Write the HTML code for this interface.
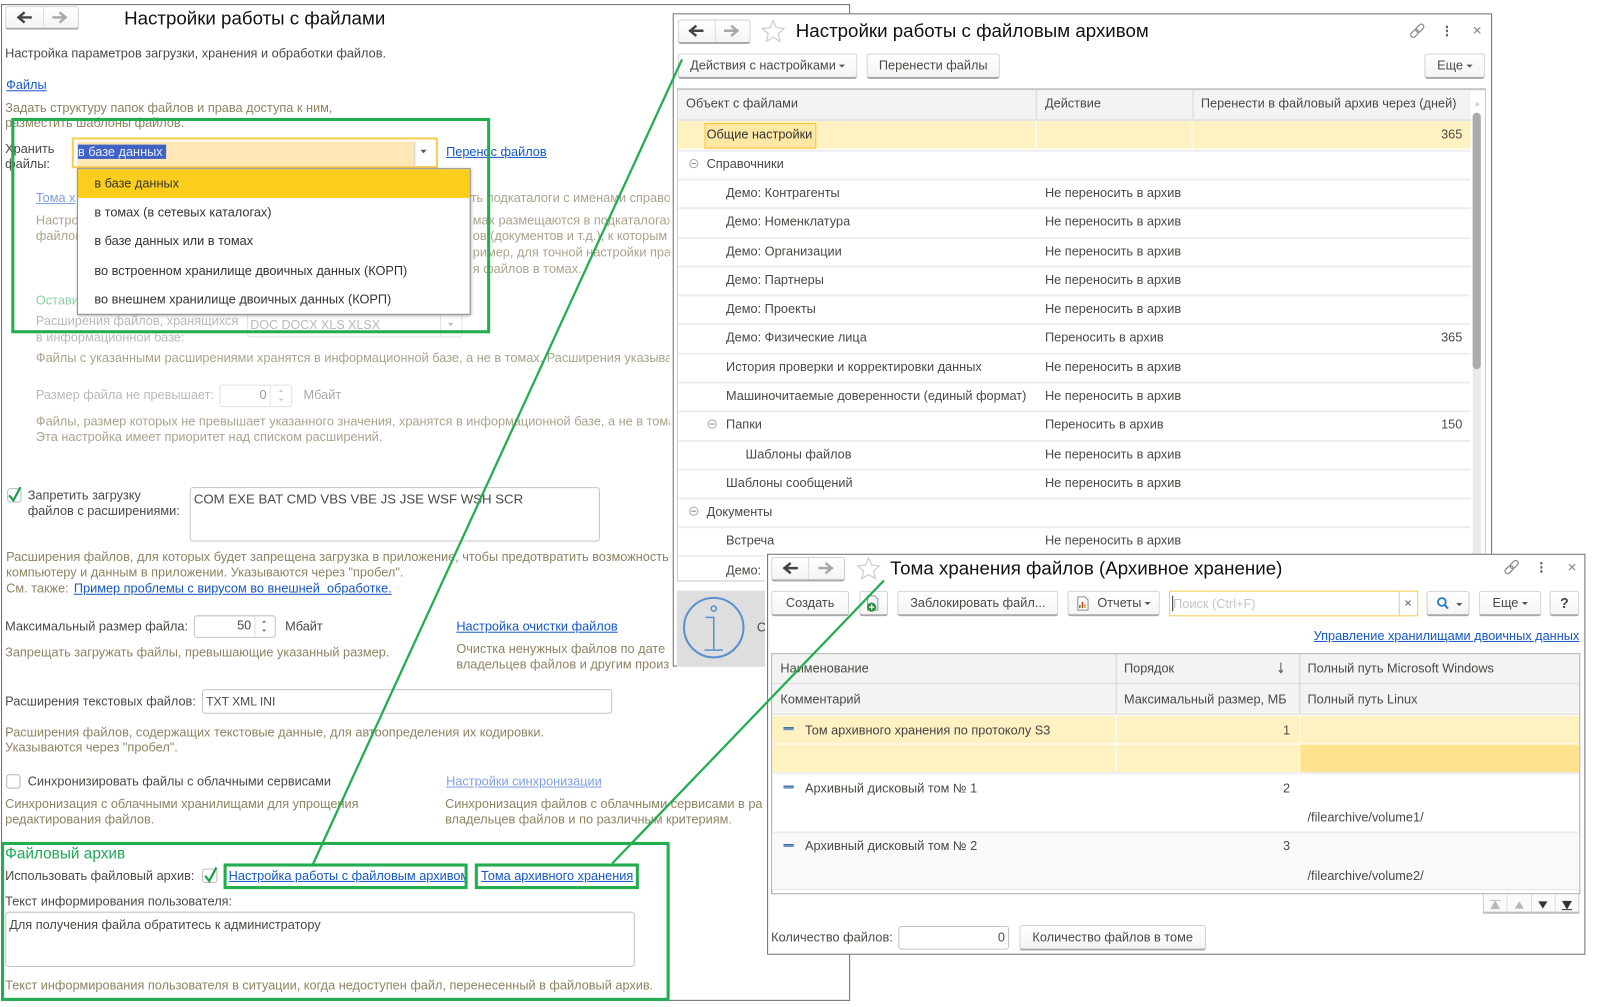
<!DOCTYPE html>
<html lang="ru">
<head>
<meta charset="utf-8">
<title>Настройки работы с файлами</title>
<style>
html,body{margin:0;padding:0;background:#fff;width:1608px;height:1007px;overflow:hidden}
#w{position:absolute;left:0;top:0;width:1568px;height:982px;transform:scale(1.0255);transform-origin:0 0;font-family:"Liberation Sans",sans-serif;font-size:12.43px;color:#4a4a44;overflow:hidden;filter:blur(.35px)}
.t{position:absolute;white-space:nowrap;line-height:16px;font-size:12.43px;height:16px}
.h{color:#8f8363}
.g{color:#aaa38e}
.d{color:#b9b9b9}
.a{color:#1557c8;text-decoration:underline}
.al{color:#7f9fe0;text-decoration:underline}
.r{text-align:right}
.ti{font-size:18.25px;line-height:24px;height:24px;color:#111}
.b{position:absolute;box-sizing:border-box;border:1px solid #cfcfcf;border-bottom:2px solid #a9a9a9;border-radius:3px;background:linear-gradient(#fff,#f4f4f4);text-align:center;line-height:22px;white-space:nowrap;color:#4a4a44}
.c{display:inline-block;width:0;height:0;border-top:3.5px solid #555;border-left:3px solid transparent;border-right:3px solid transparent;margin-left:3px;vertical-align:middle}
.f{position:absolute;box-sizing:border-box;border:1px solid #c4c4c4;border-radius:3px;background:#fff}
.win{position:absolute;box-sizing:border-box;background:#fff;border:1px solid #6e6e6e}
.box{position:absolute;box-sizing:border-box;border:3px solid #22ad50;pointer-events:none}
.sep{position:absolute;height:2px;background:#eeeeee}
.m{position:absolute;width:9px;height:9px;box-sizing:border-box;border:1px solid #a9a9a9;border-radius:50%}
.m:after{content:"";position:absolute;left:1px;top:3px;width:5px;height:1px;background:#8a8a8a}
.v{position:absolute;width:10px;height:3px;background:#6c93bd;border-top:1px solid #3f6c9f;box-sizing:border-box}
svg{position:absolute;overflow:visible}
</style>
</head>
<body>
<div id="w">

<!-- WINDOW 1 -->
<div class="win" style="left:1px;top:4px;width:828px;height:972px"></div>
<div class="b" style="left:5px;top:6px;width:72px;height:23px"></div>
<div style="position:absolute;left:42px;top:7px;width:1px;height:20px;background:#ddd"></div>
<svg style="left:0;top:0" width="10" height="10"><path d="M31 17H18M24 12l-6 5 6 5" fill="none" stroke="#444" stroke-width="2.4"/><path d="M51 17H64M58 12l6 5-6 5" fill="none" stroke="#a8a8a8" stroke-width="2.4"/></svg>
<div class="t ti" style="left:121px;top:6px">Настройки работы с файлами</div>
<div class="t" style="left:5px;top:44px">Настройка параметров загрузки, хранения и обработки файлов.</div>
<div class="t a" style="left:6px;top:75px">Файлы</div>
<div class="t h" style="left:5px;top:97px">Задать структуру папок файлов и права доступа к ним,</div>
<div class="t h" style="left:5px;top:112px">разместить шаблоны файлов.</div>
<div class="t" style="left:5px;top:137px">Хранить</div>
<div class="t" style="left:5px;top:152px">файлы:</div>

<div style="position:absolute;left:70px;top:134px;width:357px;height:30px;box-sizing:border-box;border:2px solid #f7cd4f;background:#fff"></div>
<div style="position:absolute;left:75px;top:138px;width:329px;height:24px;background:#ffe8b6"></div>
<div style="position:absolute;left:404px;top:138px;width:1px;height:24px;background:#cfcfcf"></div>
<div style="position:absolute;left:76px;top:141px;width:86px;height:14px;background:#3f62c4"></div>
<div class="t" style="left:76px;top:140px;color:#e8edff">в базе данных</div>
<svg style="left:0;top:0" width="10" height="10"><path d="M410 146h6l-3 3.500z" fill="#555"/></svg>
<div class="t a" style="left:435px;top:140px">Перенос файлов</div>

<div class="t al" style="left:35px;top:185px">Тома х</div>
<div class="t g" style="left:35px;top:207px">Настро</div>
<div class="t g" style="left:35px;top:222px">файлов</div>
<div class="t" style="left:35px;top:285px;color:#8fd0a5">Остави</div>
<div class="t g" style="left:459px;top:185px">ть подкаталоги с именами справочников</div>
<div class="t g" style="left:461px;top:207px">мах размещаются в подкаталогах</div>
<div class="t g" style="left:461px;top:222px">ов (документов и т.д.), к которым</div>
<div class="t g" style="left:461px;top:238px">ример, для точной настройки пра</div>
<div class="t g" style="left:461px;top:254px">я файлов в томах.</div>

<div class="t d" style="left:35px;top:305px">Расширения файлов, хранящихся</div>
<div class="t d" style="left:35px;top:321px">в информационной базе:</div>
<div class="f" style="left:241px;top:303px;width:210px;height:26px;border-color:#e2e2e2"></div>
<div class="t d" style="left:244px;top:309px;font-size:12.2px">DOC DOCX XLS XLSX</div>
<div style="position:absolute;left:429px;top:305px;width:1px;height:23px;background:#e6e6e6"></div>
<svg style="left:0;top:0" width="10" height="10"><path d="M437 315h5l-2.500 3z" fill="#bbb"/></svg>

<div class="t g" style="left:35px;top:341px">Файлы с указанными расширениями хранятся в информационной базе, а не в томах. Расширения указываются</div>
<div class="t d" style="left:35px;top:377px">Размер файла не превышает:</div>
<div class="f" style="left:214px;top:375px;width:71px;height:22px;border-color:#e0e0e0"></div>
<div class="t d r" style="left:214px;top:377px;width:46px;color:#9a9a9a">0</div>
<div style="position:absolute;left:263px;top:376px;width:1px;height:20px;background:#e6e6e6"></div>
<svg style="left:0;top:0" width="10" height="10"><path d="M272 382l2-2 2 2zM272 389l2 2 2-2z" fill="#bbb"/></svg>
<div class="t d" style="left:296px;top:377px;color:#a8a8a8">Мбайт</div>
<div class="t g" style="left:35px;top:403px">Файлы, размер которых не превышает указанного значения, хранятся в информационной базе, а не в томах.</div>
<div class="t g" style="left:35px;top:418px">Эта настройка имеет приоритет над списком расширений.</div>

<div class="f" style="left:7px;top:476px;width:14px;height:14px;border-color:#bbb"></div>
<svg style="left:0;top:0" width="10" height="10"><path d="M9 483l4 5 7-13" fill="none" stroke="#1fa14c" stroke-width="2.200"/></svg>
<div class="t" style="left:27px;top:475px">Запретить загрузку</div>
<div class="t" style="left:27px;top:490px">файлов с расширениями:</div>
<div class="f" style="left:185px;top:475px;width:400px;height:53px"></div>
<div class="t" style="left:189px;top:479px;font-size:12.9px">COM EXE BAT CMD VBS VBE JS JSE WSF WSH SCR</div>

<div class="t h" style="left:6px;top:535px">Расширения файлов, для которых будет запрещена загрузка в приложение, чтобы предотвратить возможность</div>
<div class="t h" style="left:6px;top:550px">компьютеру и данным в приложении. Указываются через "пробел".</div>
<div class="t h" style="left:6px;top:566px">См. также:</div>
<div class="t a" style="left:72px;top:566px;white-space:pre">Пример проблемы с вирусом во внешней  обработке.</div>

<div class="t" style="left:5px;top:603px">Максимальный размер файла:</div>
<div class="f" style="left:189px;top:600px;width:80px;height:22px"></div>
<div class="t r" style="left:189px;top:602px;width:56px">50</div>
<div style="position:absolute;left:248px;top:601px;width:1px;height:20px;background:#ddd"></div>
<svg style="left:0;top:0" width="10" height="10"><path d="M255.500 607l2-2 2 2zM255.500 614l2 2 2-2z" fill="#666"/></svg>
<div class="t" style="left:278px;top:603px">Мбайт</div>
<div class="t a" style="left:445px;top:603px">Настройка очистки файлов</div>
<div class="t h" style="left:5px;top:628px">Запрещать загружать файлы, превышающие указанный размер.</div>
<div class="t h" style="left:445px;top:625px">Очистка ненужных файлов по дате</div>
<div class="t h" style="left:445px;top:640px">владельцев файлов и другим произ</div>

<div class="t" style="left:5px;top:676px">Расширения текстовых файлов:</div>
<div class="f" style="left:197px;top:672px;width:400px;height:24px"></div>
<div class="t" style="left:201px;top:676px;font-size:11.8px">TXT XML INI</div>
<div class="t h" style="left:5px;top:706px">Расширения файлов, содержащих текстовые данные, для автоопределения их кодировки.</div>
<div class="t h" style="left:5px;top:721px">Указываются через "пробел".</div>

<div class="f" style="left:6px;top:755px;width:14px;height:14px;border-color:#b4b4b4"></div>
<div class="t" style="left:27px;top:754px">Синхронизировать файлы с облачными сервисами</div>
<div class="t al" style="left:435px;top:754px">Настройки синхронизации</div>
<div class="t h" style="left:5px;top:776px">Синхронизация с облачными хранилищами для упрощения</div>
<div class="t h" style="left:5px;top:791px">редактирования файлов.</div>
<div class="t h" style="left:434px;top:776px">Синхронизация файлов с облачными сервисами в ра</div>
<div class="t h" style="left:434px;top:791px">владельцев файлов и по различным критериям.</div>

<div class="t" style="left:5px;top:825px;font-size:15px;color:#1fa85a">Файловый архив</div>
<div class="t" style="left:5px;top:846px">Использовать файловый архив:</div>
<div class="f" style="left:197px;top:847px;width:15px;height:14px;border-color:#bbb"></div>
<svg style="left:0;top:0" width="10" height="10"><path d="M200 854l4 5 7-13" fill="none" stroke="#1fa14c" stroke-width="2.200"/></svg>
<div class="t a" style="left:223px;top:846px;width:231px;overflow:hidden">Настройка работы с файловым архивом</div>
<div class="t a" style="left:469px;top:846px">Тома архивного хранения</div>
<div class="t" style="left:5px;top:871px">Текст информирования пользователя:</div>
<div class="f" style="left:5px;top:889px;width:614px;height:54px"></div>
<div class="t" style="left:9px;top:894px">Для получения файла обратитесь к администратору</div>
<div class="t h" style="left:5px;top:953px">Текст информирования пользователя в ситуации, когда недоступен файл, перенесенный в файловый архив.</div>

<div class="box" style="left:11px;top:115px;width:467px;height:210px"></div>
<div class="box" style="left:1px;top:821px;width:652px;height:155px"></div>
<div class="box" style="left:218px;top:842px;width:238px;height:25px"></div>
<div class="box" style="left:463px;top:842px;width:160px;height:25px"></div>

<!-- POPUP -->
<div style="position:absolute;left:75px;top:164px;width:384px;height:143px;box-sizing:border-box;background:#fff;border:1px solid #8a8a8a;box-shadow:1px 1px 3px rgba(0,0,0,.3)"></div>
<div style="position:absolute;left:76px;top:165px;width:382px;height:28px;background:#fbcd1d"></div>
<div class="t" style="left:92px;top:171px;color:#333">в базе данных</div>
<div class="t" style="left:92px;top:199px;color:#333">в томах (в сетевых каталогах)</div>
<div class="t" style="left:92px;top:227px;color:#333">в базе данных или в томах</div>
<div class="t" style="left:92px;top:256px;color:#333">во встроенном хранилище двоичных данных (КОРП)</div>
<div class="t" style="left:92px;top:284px;color:#333">во внешнем хранилище двоичных данных (КОРП)</div>

<!-- WINDOW 2 -->
<div class="win" style="left:656px;top:13px;width:799px;height:637px;box-shadow:-3px 0 0 #fff"></div>
<div class="b" style="left:661px;top:19px;width:71px;height:24px"></div>
<div style="position:absolute;left:697px;top:20px;width:1px;height:21px;background:#ddd"></div>
<svg style="left:0;top:0" width="10" height="10">
<path d="M686 30H672M679 25l-6 5 6 5" fill="none" stroke="#444" stroke-width="2.400"/>
<path d="M706 30H720M713 25l6 5-6 5" fill="none" stroke="#a8a8a8" stroke-width="2.400"/>
<path d="M754 20l3 7 7.500.8-5.600 5 1.700 7.400-6.600-3.900-6.600 3.900 1.700-7.400-5.600-5 7.500-.8z" fill="#fff" stroke="#cfcfcf" stroke-width="1.300"/>
<g transform="translate(1382 30) rotate(-45)" fill="none" stroke="#8f8f8f" stroke-width="1.300"><rect x="-8" y="-2.500" width="9" height="5" rx="2.500"/><rect x="-1" y="-2.500" width="9" height="5" rx="2.500"/></g>
<path d="M1411 25v2.500M1411 29v2.500M1411 33v2.500" stroke="#666" stroke-width="2"/>
<path d="M1437.500 26.500l6 6M1443.500 26.500l-6 6" stroke="#8a8a8a" stroke-width="1.200"/>
</svg>
<div class="t ti" style="left:776px;top:18px">Настройки работы с файловым архивом</div>

<div class="b" style="left:661px;top:52px;width:175px;height:25px">Действия с настройками<i class="c"></i></div>
<div class="b" style="left:845px;top:52px;width:130px;height:25px">Перенести файлы</div>
<div class="b" style="left:1389px;top:52px;width:59px;height:25px">Еще<i class="c"></i></div>

<div style="position:absolute;left:660px;top:86px;width:789px;height:481px;box-sizing:border-box;border:1px solid #c8c8c8;border-top:2px solid #c4c4c4"></div>
<div style="position:absolute;left:661px;top:88px;width:773px;height:28px;background:#f3f3f3"></div>
<div style="position:absolute;left:661px;top:116px;width:773px;height:2px;background:#e4e4e4"></div>
<div style="position:absolute;left:1010px;top:88px;width:1px;height:28px;background:#d6d6d6"></div>
<div style="position:absolute;left:1163px;top:88px;width:1px;height:28px;background:#d6d6d6"></div>
<div class="t" style="left:669px;top:93px">Объект с файлами</div>
<div class="t" style="left:1019px;top:93px">Действие</div>
<div class="t" style="left:1171px;top:93px">Перенести в файловый архив через (дней)</div>

<div style="position:absolute;left:661px;top:118px;width:773px;height:27px;background:#fef1c2"></div>
<div style="position:absolute;left:1010px;top:118px;width:1px;height:27px;background:#fff"></div>
<div style="position:absolute;left:1162px;top:118px;width:1px;height:27px;background:#fff"></div>
<div style="position:absolute;left:687px;top:120px;width:109px;height:25px;box-sizing:border-box;border:1px solid #fbc531;background:#fee8a4"></div>
<div class="t" style="left:689px;top:123px;color:#333">Общие настройки</div>
<div class="t r" style="left:1326px;top:123px;width:100px">365</div>

<div class="sep" style="left:661px;top:146px;width:773px"></div>
<div class="sep" style="left:661px;top:174px;width:773px"></div>
<div class="sep" style="left:661px;top:202px;width:773px"></div>
<div class="sep" style="left:661px;top:231px;width:773px"></div>
<div class="sep" style="left:661px;top:259px;width:773px"></div>
<div class="sep" style="left:661px;top:287px;width:773px"></div>
<div class="sep" style="left:661px;top:315px;width:773px"></div>
<div class="sep" style="left:661px;top:344px;width:773px"></div>
<div class="sep" style="left:661px;top:372px;width:773px"></div>
<div class="sep" style="left:661px;top:400px;width:773px"></div>
<div class="sep" style="left:661px;top:429px;width:773px"></div>
<div class="sep" style="left:661px;top:457px;width:773px"></div>
<div class="sep" style="left:661px;top:485px;width:773px"></div>
<div class="sep" style="left:661px;top:513px;width:773px"></div>
<div class="sep" style="left:661px;top:541px;width:773px"></div>

<div class="m" style="left:672px;top:155px"></div>
<div class="t" style="left:689px;top:152px">Справочники</div>
<div class="t" style="left:708px;top:180px">Демо: Контрагенты</div><div class="t" style="left:1019px;top:180px">Не переносить в архив</div>
<div class="t" style="left:708px;top:208px">Демо: Номенклатура</div><div class="t" style="left:1019px;top:208px">Не переносить в архив</div>
<div class="t" style="left:708px;top:237px">Демо: Организации</div><div class="t" style="left:1019px;top:237px">Не переносить в архив</div>
<div class="t" style="left:708px;top:265px">Демо: Партнеры</div><div class="t" style="left:1019px;top:265px">Не переносить в архив</div>
<div class="t" style="left:708px;top:293px">Демо: Проекты</div><div class="t" style="left:1019px;top:293px">Не переносить в архив</div>
<div class="t" style="left:708px;top:321px">Демо: Физические лица</div><div class="t" style="left:1019px;top:321px">Переносить в архив</div><div class="t r" style="left:1326px;top:321px;width:100px">365</div>
<div class="t" style="left:708px;top:350px">История проверки и корректировки данных</div><div class="t" style="left:1019px;top:350px">Не переносить в архив</div>
<div class="t" style="left:708px;top:378px">Машиночитаемые доверенности (единый формат)</div><div class="t" style="left:1019px;top:378px">Не переносить в архив</div>
<div class="m" style="left:690px;top:409px"></div>
<div class="t" style="left:708px;top:406px">Папки</div><div class="t" style="left:1019px;top:406px">Переносить в архив</div><div class="t r" style="left:1326px;top:406px;width:100px">150</div>
<div class="t" style="left:727px;top:435px">Шаблоны файлов</div><div class="t" style="left:1019px;top:435px">Не переносить в архив</div>
<div class="t" style="left:708px;top:463px">Шаблоны сообщений</div><div class="t" style="left:1019px;top:463px">Не переносить в архив</div>
<div class="m" style="left:672px;top:494px"></div>
<div class="t" style="left:689px;top:491px">Документы</div>
<div class="t" style="left:708px;top:519px">Встреча</div><div class="t" style="left:1019px;top:519px">Не переносить в архив</div>
<div class="t" style="left:708px;top:548px">Демо:</div>

<div style="position:absolute;left:1436px;top:110px;width:8px;height:456px;background:#e9e9e9;border-radius:4px"></div>
<div style="position:absolute;left:1436px;top:110px;width:8px;height:250px;background:#ababab;border-radius:4px"></div>
<svg style="left:0;top:0" width="10" height="10"><path d="M1438 103l2.500-4 2.500 4z" fill="#ccc"/></svg>

<div style="position:absolute;left:660px;top:576px;width:90px;height:74px;background:#dedede"></div>
<svg style="left:0;top:0" width="10" height="10">
<circle cx="696" cy="612" r="29" fill="none" stroke="#5a90cf" stroke-width="2"/>
<circle cx="696" cy="593.500" r="2.500" fill="none" stroke="#5a90cf" stroke-width="1.500"/>
<path d="M688 602h8v31M687 634h18" fill="none" stroke="#5a90cf" stroke-width="1.500"/>
</svg>
<div class="t" style="left:738px;top:604px">С</div>

<!-- WINDOW 3 -->
<div class="win" style="left:748px;top:540px;width:798px;height:391px;box-shadow:-2px 0 0 #fff"></div>
<div class="b" style="left:752px;top:543px;width:72px;height:24px"></div>
<div style="position:absolute;left:788px;top:544px;width:1px;height:21px;background:#ddd"></div>
<svg style="left:0;top:0" width="10" height="10">
<path d="M778 554H764M771 549l-6 5 6 5" fill="none" stroke="#444" stroke-width="2.400"/>
<path d="M798 554H812M805 549l6 5-6 5" fill="none" stroke="#a8a8a8" stroke-width="2.400"/>
<path d="M847 544l3 7 7.500.8-5.600 5 1.700 7.400-6.600-3.900-6.600 3.900 1.700-7.400-5.600-5 7.500-.8z" fill="#fff" stroke="#cfcfcf" stroke-width="1.300"/>
<g transform="translate(1474 553) rotate(-45)" fill="none" stroke="#8f8f8f" stroke-width="1.300"><rect x="-8" y="-2.500" width="9" height="5" rx="2.500"/><rect x="-1" y="-2.500" width="9" height="5" rx="2.500"/></g>
<path d="M1503 548v2.500M1503 552v2.500M1503 556v2.500" stroke="#666" stroke-width="2"/>
<path d="M1530 550l6 6M1536 550l-6 6" stroke="#8a8a8a" stroke-width="1.200"/>
</svg>
<div class="t ti" style="left:868px;top:542px">Тома хранения файлов (Архивное хранение)</div>

<div class="b" style="left:752px;top:576px;width:76px;height:25px">Создать</div>
<div class="b" style="left:838px;top:576px;width:28px;height:25px"></div>
<svg style="left:0;top:0" width="10" height="10">
<path d="M846 581h7l3 3v11h-10z" fill="#f4f6fa" stroke="#8f9bad"/>
<circle cx="850" cy="592" r="4.500" fill="#2a8f43"/>
<path d="M847.500 592h5M850 589.500v5" stroke="#fff" stroke-width="1.200"/>
</svg>
<div class="b" style="left:875px;top:576px;width:157px;height:25px">Заблокировать файл...</div>
<div class="b" style="left:1041px;top:576px;width:90px;height:25px;padding-left:20px">Отчеты<i class="c"></i></div>
<svg style="left:0;top:0" width="10" height="10">
<path d="M1051 582h7l3 3v10h-10z" fill="#fff" stroke="#8a8a8a"/>
<path d="M1053 593v-3" stroke="#2a9a4a" stroke-width="1.500"/><path d="M1055.500 593v-6" stroke="#c8352b" stroke-width="1.500"/><path d="M1058 593v-4" stroke="#d9a520" stroke-width="1.500"/>
</svg>
<div style="position:absolute;left:1140px;top:576px;width:243px;height:25px;box-sizing:border-box;border:1px solid #f7cd4f;background:#fff"></div>
<div style="position:absolute;left:1143px;top:581px;width:1px;height:15px;background:#333"></div>
<div class="t" style="left:1144px;top:581px;color:#c4c4c4">Поиск (Ctrl+F)</div>
<div style="position:absolute;left:1364px;top:577px;width:1px;height:23px;background:#ccc"></div>
<svg style="left:0;top:0" width="10" height="10">
<path d="M1370.500 585.500l5 5M1375.500 585.500l-5 5" stroke="#777" stroke-width="1.100"/>
</svg>
<div class="b" style="left:1391px;top:576px;width:42px;height:25px"></div>
<svg style="left:0;top:0" width="10" height="10">
<circle cx="1406" cy="587" r="3.800" fill="none" stroke="#2f7cc4" stroke-width="1.800"/>
<path d="M1409 590l3 3.500" stroke="#2f7cc4" stroke-width="2"/>
<path d="M1420 588h6l-3 3z" fill="#555"/>
</svg>
<div class="b" style="left:1442px;top:576px;width:61px;height:25px">Еще<i class="c"></i></div>
<div class="b" style="left:1511px;top:576px;width:29px;height:25px;font-size:14px;font-weight:bold">?</div>

<div class="t a r" style="left:1240px;top:612px;width:300px">Управление хранилищами двоичных данных</div>

<div style="position:absolute;left:752px;top:637px;width:789px;height:235px;box-sizing:border-box;border:1px solid #a9a9a9"></div>
<div style="position:absolute;left:753px;top:638px;width:787px;height:58px;background:#f3f3f3"></div>
<div style="position:absolute;left:753px;top:666px;width:787px;height:1px;background:#ddd"></div>
<div style="position:absolute;left:753px;top:696px;width:787px;height:1px;background:#ddd"></div>
<div style="position:absolute;left:1088px;top:638px;width:1px;height:58px;background:#d4d4d4"></div>
<div style="position:absolute;left:1267px;top:638px;width:1px;height:58px;background:#d4d4d4"></div>
<div class="t" style="left:761px;top:644px">Наименование</div>
<div class="t" style="left:1096px;top:644px">Порядок</div>
<svg style="left:0;top:0" width="10" height="10"><path d="M1249 646v10M1247 653.500l2 2.500 2-2.500" fill="none" stroke="#666" stroke-width="1.100"/></svg>
<div class="t" style="left:1275px;top:644px">Полный путь Microsoft Windows</div>
<div class="t" style="left:761px;top:674px">Комментарий</div>
<div class="t" style="left:1096px;top:674px">Максимальный размер, МБ</div>
<div class="t" style="left:1275px;top:674px">Полный путь Linux</div>

<div style="position:absolute;left:753px;top:698px;width:787px;height:55px;background:#fef1c2"></div>
<div style="position:absolute;left:753px;top:725px;width:787px;height:1px;background:#fff"></div>
<div style="position:absolute;left:1088px;top:698px;width:1px;height:55px;background:#fff"></div>
<div style="position:absolute;left:1267px;top:698px;width:1px;height:55px;background:#fff"></div>
<div style="position:absolute;left:1268px;top:726px;width:272px;height:27px;background:#fee28e"></div>
<div class="v" style="left:764px;top:709px"></div>
<div class="t" style="left:785px;top:704px;color:#444">Том архивного хранения по протоколу S3</div>
<div class="t r" style="left:1158px;top:704px;width:100px">1</div>
<div class="sep" style="left:753px;top:753px;width:787px"></div>

<div class="v" style="left:764px;top:766px"></div>
<div class="t" style="left:785px;top:761px">Архивный дисковый том № 1</div>
<div class="t r" style="left:1158px;top:761px;width:100px">2</div>
<div class="t" style="left:1275px;top:789px">/filearchive/volume1/</div>
<div style="position:absolute;left:753px;top:811px;width:787px;height:57px;background:#f9f9f9;border-top:1px solid #e6e6e6;border-bottom:1px solid #e6e6e6;box-sizing:border-box"></div>
<div class="v" style="left:764px;top:823px"></div>
<div class="t" style="left:785px;top:817px">Архивный дисковый том № 2</div>
<div class="t r" style="left:1158px;top:817px;width:100px">3</div>
<div class="t" style="left:1275px;top:846px">/filearchive/volume2/</div>

<div style="position:absolute;left:1446px;top:872px;width:94px;height:19px;box-sizing:border-box;border:1px solid #cfcfcf;border-top:0;border-bottom:2px solid #bbb;background:#fafafa"></div>
<div style="position:absolute;left:1469px;top:872px;width:1px;height:18px;background:#ddd"></div>
<div style="position:absolute;left:1493px;top:872px;width:1px;height:18px;background:#ddd"></div>
<div style="position:absolute;left:1516px;top:872px;width:1px;height:18px;background:#ddd"></div>
<svg style="left:0;top:0" width="10" height="10">
<path d="M1453 878h10M1454 886l4-7 4 7z" fill="#b9b9b9" stroke="#b9b9b9"/>
<path d="M1477 886l4.500-7 4.500 7z" fill="#b9b9b9"/>
<path d="M1500 879l4.500 7 4.500-7z" fill="#333"/>
<path d="M1523 887h10M1524 879l4 7 4-7z" fill="#333" stroke="#333"/>
</svg>

<div class="t" style="left:752px;top:906px">Количество файлов:</div>
<div class="f" style="left:876px;top:903px;width:108px;height:23px"></div>
<div class="t r" style="left:876px;top:906px;width:104px">0</div>
<div class="b" style="left:994px;top:902px;width:182px;height:25px">Количество файлов в томе</div>

<!-- GREEN LINES -->
<svg style="left:0;top:0" width="10" height="10">
<path d="M305 843L665 58" fill="none" stroke="#22ad50" stroke-width="2.200"/>
<path d="M597 842L862 566" fill="none" stroke="#22ad50" stroke-width="2.200"/>
</svg>
</div>
</body>
</html>
